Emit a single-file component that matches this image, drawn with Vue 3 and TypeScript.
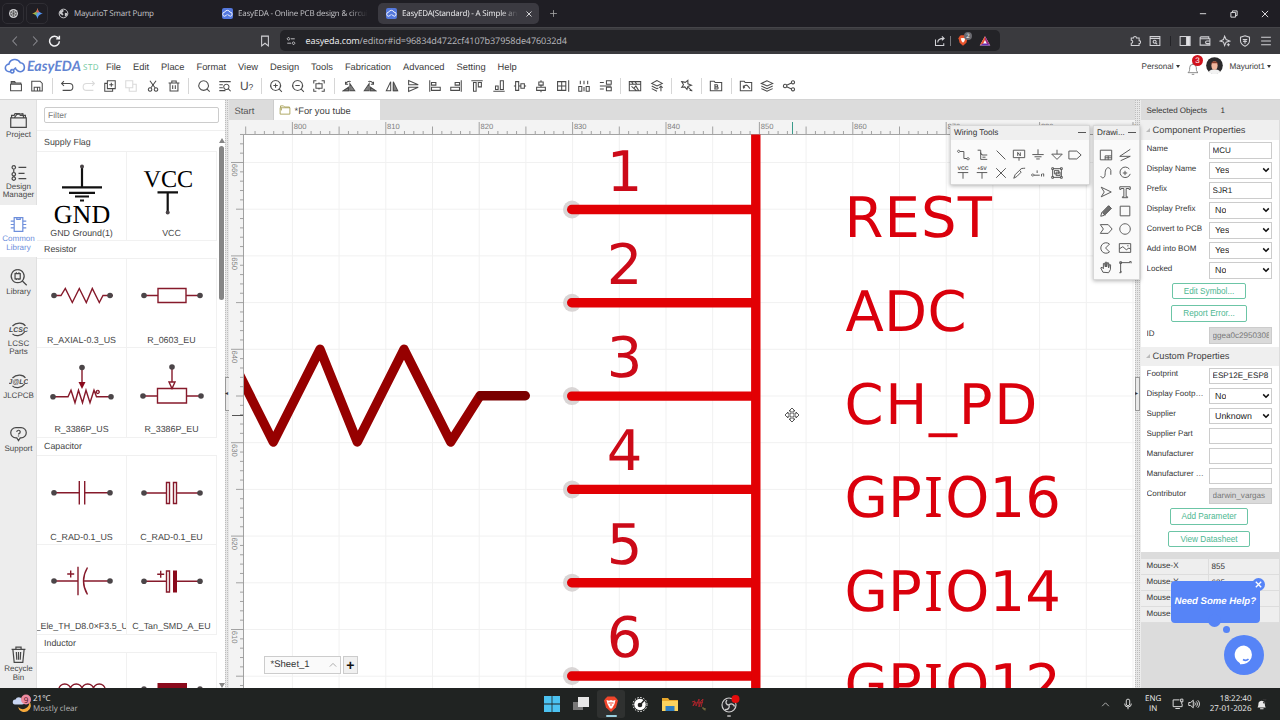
<script setup lang="ts">
interface Icon {
  d?: string
  fill?: string
  text?: string
  dim?: boolean
}

interface Part {
  label: string
  d: string
  fill?: string
  dots: number[][]
  black?: boolean
  text?: { value: string; x: number; y: number; size: number }
}

interface Field {
  label: string
  value: string
  kind?: 'select' | 'readonly'
}

const menus = ['File', 'Edit', 'Place', 'Format', 'View', 'Design', 'Tools', 'Fabrication', 'Advanced', 'Setting', 'Help']

// toolbar groups, drawn on a 16x16 grid
const toolbar: Icon[][] = [
  [
    { d: 'M2.5 5.5V3h4l1 1.5h6v1M1.8 6h12.4v7.5H1.8zM2.5 4.5h11' },
    { d: 'M2 2.5h9.5L14 5v8.8H2zM4.8 13.8V9.5h6.4v4.3M8.5 9.5v4.3' }
  ],
  [
    { d: 'M4.5 2.5L1.8 5.2l2.7 2.7M1.8 5.2h9a3.8 3.8 0 0 1 0 7.8H3' },
    { d: 'M11.5 2.5l2.7 2.7-2.7 2.7M14.2 5.2h-9a3.8 3.8 0 0 0 0 7.8H13', dim: true },
    { d: 'M5 2h9v9H5zM9.5 4.2v4.6M7.2 6.5h4.6M5 5H2v9h9v-3' },
    { d: 'M2 2h8v8H2zM6 10v4h8V6h-4', dim: true },
    { d: 'M4.5 2l5.8 8M11.5 2L5.7 10M4.6 10a2 2 0 1 0 .1 0M11.4 10a2 2 0 1 0 .1 0' },
    { d: 'M1.8 4.5h12.4M5.5 4.5V2.3h5v2.2M3.5 4.5v9.3h9V4.5M6.5 7v4.5M9.5 7v4.5' }
  ],
  [
    { d: 'M7.5 2a5.5 5.5 0 1 0 .1 0M11.5 11.5l3 3' },
    { d: 'M1.5 3h13M1.5 6.5h4M1.5 10h4M1.5 13.3h7M9.5 6a3 3 0 1 0 .1 0M11.8 11.2l2.7 2.8' },
    { text: 'U' }
  ],
  [
    { d: 'M7.5 1.8a5.7 5.7 0 1 0 .1 0M11.7 11.7l3 3M7.5 5v5M5 7.5h5' },
    { d: 'M7.5 1.8a5.7 5.7 0 1 0 .1 0M11.7 11.7l3 3M5 7.5h5' },
    { d: 'M2 5V2h3M11 2h3v3M14 11v3h-3M5 14H2v-3M4.5 5.5h7v5h-7zM8 4v1.5M8 10.5V12' }
  ],
  [
    { d: 'M1.5 13.5h6v-4zM9 13.5h5.5L9 5.5zM4 6a4.5 4.5 0 0 1 6-3M4 3v3h3', fill: 'M2 13.5h5.5V9.8zM10 8.5v4.500h3z' },
    { d: 'M14.5 13.5h-6v-4zM7 13.5H1.5L7 5.5zM12 6a4.5 4.5 0 0 0-6-3M12 3v3H9', fill: 'M14 13.5H8.5V9.8zM6 8.5v4.500H3z' },
    { d: 'M6.5 3v10.5H1.5zM9.5 3v10.5h5z', fill: 'M9.5 5v8.5h4z' },
    { d: 'M3 6.5V1.8l11 4.7zM3 9.5v4.7l11-4.7z' },
    { d: 'M2 1.5v13M4 4h5v3H4zM4 9.5h10v3.5H4z' },
    { d: 'M14 1.5v13M12 4H7v3h5zM12 9.5H2v3.5h10z' },
    { d: 'M1.5 2h13M4 4h3v10H4zM9.5 4H13v5H9.5z' },
    { d: 'M1.5 14h13M4 12h3V8H4zM9.5 12H13V2H9.5z' },
    { d: 'M1 8h2M3 3h3.5v10H3zM6.5 8H9M9 5.5h4v5H9zM13 8h2' },
    { d: 'M8 1.5v2M5.5 3.5h5v3.5h-5zM8 7v2.5M3 9.5h10v3.5H3zM8 13v2' },
    { d: 'M1.8 3h9.4v10H1.8zM6.5 3v10M1.8 8h9.4M14.5 1.5v13' },
    { d: 'M2 8.5h3.500V14H2zM10.5 8.5H14V14h-3.500zM8 2v4M8 9v5M3.8 2v4M12.2 2v4' },
    { d: 'M8.5 2H14v4H8.5zM8.5 9.5H14v4H8.5zM1 4h4.5M1 8h13M1 11.5h4.5' }
  ],
  [
    { d: 'M1.5 3h13v10.5h-13zM1.5 6h13M4 3l2 3M8 3l2 3M4 8.5l6 5M7 10.5l2-2.5 3 5' },
    { d: 'M8 1.8L2 5l6 3 6-3zM2 8l6 3 1.5-.7M2 11l6 3M12.5 14V8M10.5 10l2-2 2 2' }
  ],
  [{ d: 'M2 3l4 .8L9 1.5v4L13 7l-4 1.5L8 12 5.5 9 2 9.5 4 6.5zM9.5 9.5l4.5 4.5M11 13h3' }],
  [{ d: 'M1.5 13.5V2.5H6l1 1.5h7.5v9.5zM6 6.500h3a1.300 1.300 0 0 1 0 2.500H6.500h3a1.300 1.300 0 0 1 0 2.500H6M6.800 6.500v5' }],
  [
    { d: 'M1.5 13.5V2.5H6l1 1.5h7.5v9.5zM5.5 11a2.8 2.8 0 0 1 5-2.5l2 2.5M5 7.5v2h2' },
    { d: 'M8 2L1.5 5 8 8l6.500-3zM1.5 8L8 11l6.500-3M1.5 11L8 14l6.500-3' },
    { d: 'M3.5 6a2 2 0 1 0 .1 0M12.5 2a1.8 1.8 0 1 0 .1 0M12.5 10a1.8 1.8 0 1 0 .1 0M5.3 7.2l5.5-2.7M5.3 8.8l5.5 2.7' }
  ]
]

const rail = [
  { label: ['Project'], d: 'M3 8V5h3l1-2h5l1 2h6v3M2 8h18v11H2zM6 8l3-4 7-1 1 5' },
  { label: ['Design', 'Manager'], d: 'M5.5 3a2 2 0 1 0 .1 0M5.5 7v4M5.5 11a2 2 0 1 0 .1 0M5.5 15v1M5.5 16a2 2 0 1 0 .1 0M11 5h9M11 12h7M11 18h9' },
  { label: ['Common', 'Library'], d: 'M6 3h10v16H6zM9 3v2h4V3M6 7H2M6 11H2M6 15H2M16 7h4M16 11h4M16 15h4', active: true },
  { label: ['Library'], d: 'M10 2a7.5 7.5 0 1 0 .1 0M15.5 15l5 5M7 6.5h6v6H7zM8.5 6.5V5M11.5 6.5V5M8.5 14v-1.5M11.5 14v-1.5' },
  { label: ['LCSC', 'Parts'], d: 'M4 7C8 3 16 2 19 7M18 14C14 19 7 19 4 16', logo: 'LCSC' },
  { label: ['JLCPCB'], d: 'M4 7C8 3 16 2 19 7M18 14C14 19 7 19 4 16', logo: 'J@LC' },
  { label: ['Support'], d: 'M8 3h6a6 6 0 0 1 0 12l-1 0-2 3-2-3H8A6 6 0 0 1 8 3zM9 8a2 2 0 1 1 2.5 2l-.5 1M11 12.3v.9' }
]

const library: { title: string; parts: Part[] }[] = [
  {
    title: 'Supply Flag',
    parts: [
      {
        label: 'GND Ground(1)',
        d: 'M45 14v21M25 35.3h40M32 40.8h26M38 44.5h14M43 48.5h4',
        dots: [[45, 14.5, 2]],
        black: true,
        text: { value: 'GND', x: 45, y: 71, size: 26 }
      },
      {
        label: 'VCC',
        d: 'M30.5 40.3h20.5M40.7 41v19',
        dots: [[40.7, 60.5, 2]],
        black: true,
        text: { value: 'VCC', x: 41.3, y: 35.3, size: 24.2 }
      }
    ]
  },
  {
    title: 'Resistor',
    parts: [
      { label: 'R_AXIAL-0.3_US', d: 'M17 36.5h7l4.3-7 7 14 7-14 7 14 6-14 7 14 3.7-7h10', dots: [[17, 36.5], [73, 36.5]] },
      { label: 'R_0603_EU', d: 'M17 36.5h14M31 29.5h28v14H31zM59 36.5h14', dots: [[17, 36.5], [73, 36.5]] },
      {
        label: 'R_3386P_US',
        d: 'M45 19.5v16M16 48.7h15l3-6.5 4 12.5 3.5-12.5 4 12.5L49 42.2l4 12.5 4-12.5 2.5 6.5H74M60.7 42.5a1.5 1.5 0 1 0 .1 0',
        fill: 'M41.5 34h7L45 41z',
        dots: [[45, 19.5], [16, 48.7], [74, 48.7]]
      },
      {
        label: 'R_3386P_EU',
        d: 'M45 19v15M42 34h6l-3 6.5zM16 48h14.5M30.5 40.5h29V55h-29zM59.5 48H74',
        dots: [[45, 19], [16, 48], [74, 48]]
      }
    ]
  },
  {
    title: 'Capacitor',
    parts: [
      { label: 'C_RAD-0.1_US', d: 'M17 36.7h25.3M42.3 25v23.5M47.7 25v23.5M47.7 36.7H73', dots: [[17, 36.7], [73, 36.7]] },
      { label: 'C_RAD-0.1_EU', d: 'M17 37h22.5M39.5 26.5h3v21h-3zM46.5 26.5h3v21h-3zM49.5 37H73', dots: [[17, 37], [73, 37]] },
      { label: 'C_Ele_TH_D8.0×F3.5_US', d: 'M17 36h24M41 21.7v28.6M50.5 22.5q-8 13.5 0 27M46.5 36H73M30.2 29h7M33.7 25.5v7', dots: [[17, 36], [73, 36]] },
      {
        label: 'C_Tan_SMD_A_EU',
        d: 'M17 36.3h22.5M39.5 26h3v21h-3zM49.5 36.3H73M30.2 29.3h7M33.7 25.8v7',
        fill: 'M46 25.5h4v22h-4z',
        dots: [[17, 36.3], [73, 36.3]]
      }
    ]
  },
  {
    title: 'Inductor',
    parts: [
      { label: 'L_US', d: 'M22 36a5.7 5 0 0 1 11.5 0a5.7 5 0 0 1 11.5 0a5.7 5 0 0 1 11.5 0a5.7 5 0 0 1 11.5 0', dots: [] },
      { label: 'L_EU', d: 'M17 36h56', fill: 'M30.5 30h29.5v13H30.5z', dots: [[17, 36], [73, 36]] }
    ]
  }
]

const wiringTools: Icon[] = [
  { d: 'M3 2.5a1.3 1.3 0 1 0 .1 0M4.5 4H9v8h3.5M13.7 11a1.3 1.3 0 1 0 .1 0' },
  { d: 'M3 2.500h3.500v4l2 1.500H14M6.500 5v8H14M8.500 8l-2-2M8.500 10.500H12' },
  { d: 'M3 3l10 10' },
  { d: 'M1.5 2.5h13V11h-13zM6.5 9V5l3 4V5M8 11v3.5' },
  { d: 'M8 1.5V7M1.5 7.5h13M4 10h8M6 12.5h4' },
  { d: 'M8 2v5M2 7h12l-6 6z' },
  { d: 'M1 3.5h9L15 8l-5 4.5H1z' },
  { text: 'VCC', d: 'M2 7.5h12M8 7.5v7' },
  { text: '+5V', d: 'M2 7.5h12M8 7.5v7' },
  { d: 'M2.5 2.5l11 11M13.5 2.5l-11 11' },
  { d: 'M2 14l1.5-4 5-5 2 2-5 5zM9 5c1-3 3-2 6-2.5' },
  { d: 'M2 9a1.3 1.3 0 1 0 .1 0M3.5 10.5H10M7 8V5M12 9v3M14.5 12V9h-1.5' },
  { d: 'M2 2h2v2H2zM12 2h2v2h-2zM2 12h2v2H2zM12 12h2v2h-2zM4 3h8M3 4v8M13 4v8M4 13h8M5 5h5v4H5zM7 7h4.5v4H7z' }
]

const drawingTools: Icon[] = [
  { d: 'M1.5 2.5h13v11h-13zM7 9h7.5M7 9v4.5M10.5 9v4.5M7 11.2h7.5' },
  { d: 'M14 1.500L2 9.5h12L3 14.500' },
  { d: 'M2 11.500c1.500 3.500 5 2.500 5-2.500 0-8 5-9 6.500-4v5' },
  { d: 'M13 3.5A6 6 0 1 0 14 9M8 5.5v5M5.5 8h5' },
  { d: 'M2.5 2.5L14 8 2.5 13.5 6 8z' },
  { d: 'M2 2h12v3h-1.5V4H9.3v9.5H11V14.5H5v-1h1.7V4H3.5v1H2z' },
  { d: 'M2 14l1-4 8-8 3 3-8 8zM4 10l3 3', fill: 'M4 9.5l7-7.5 3 3-7.5 7.5z' },
  { d: 'M2.5 2.5h11v11h-11z' },
  { d: 'M1.5 3h9L15 8l-4.5 5h-9L5 8z' },
  { d: 'M8 2a6 6 0 1 0 .1 0' },
  { d: 'M12 3.5A6 6 0 1 0 12 12.5L7.5 8z' },
  { d: 'M1.5 3h13v10h-13zM1.5 9l4-2.5 4 3.5 3-2 2 1.5M10.5 5.5h1.5' },
  { d: 'M4.5 14L2 9l1.5-.8L5 10V4l1.3-.3L7.3 8V2.5h1.4V8l1-5 1.3.3V9l1-4 1.3.5L13 11l-2 3.5z' },
  { d: 'M3 14V3h11M1.5 14.5h2v-2M13 1.8h2v2M2 2h2v2H2z' }
]

const componentFields: Field[] = [
  { label: 'Name', value: 'MCU' },
  { label: 'Display Name', value: 'Yes', kind: 'select' },
  { label: 'Prefix', value: 'SJR1' },
  { label: 'Display Prefix', value: 'No', kind: 'select' },
  { label: 'Convert to PCB', value: 'Yes', kind: 'select' },
  { label: 'Add into BOM', value: 'Yes', kind: 'select' },
  { label: 'Locked', value: 'No', kind: 'select' }
]

const customFields: Field[] = [
  { label: 'Footprint', value: 'ESP12E_ESP8' },
  { label: 'Display Footprint', value: 'No', kind: 'select' },
  { label: 'Supplier', value: 'Unknown', kind: 'select' },
  { label: 'Supplier Part', value: '' },
  { label: 'Manufacturer', value: '' },
  { label: 'Manufacturer Part', value: '' },
  { label: 'Contributor', value: 'darwin_vargas', kind: 'readonly' }
]

const mouseRows = [
  ['Mouse-X', '855'],
  ['Mouse-Y', '635'],
  ['Mouse-DX', '25'],
  ['Mouse-DY', '10']
]

// one sheet unit is 9.34 screen pixels at this zoom level
const unit = 9.34
const xTicks = Array.from({ length: 96 }, (_, i) => ({ n: 795 + i, x: 292.4 + (i - 5) * unit }))
const yTicks = Array.from({ length: 60 }, (_, i) => ({ n: 663 - i, y: 162.5 + (i - 3) * unit }))

const pins = [
  { no: '1', name: 'REST', gap: 1.1 },
  { no: '2', name: 'ADC', gap: 0.3 },
  { no: '3', name: 'CH_PD', gap: 1.7 },
  { no: '4', name: 'GPIO16', gap: 0.2 },
  { no: '5', name: 'GPIO14', gap: 0.2 },
  { no: '6', name: 'GPIO12', gap: 0.2 }
].map((p, i) => ({ ...p, y: 209.5 + i * 93.3 }))
</script>

<template>
  <div class="screen">
    <!-- browser tabs -->
    <div class="tabs">
      <div class="pinned">
        <svg viewBox="0 0 16 16" class="i11"><circle cx="8" cy="8" r="6.5" fill="#d2d2d5" /><path d="M8 3.5l4 2.3v4.5L8 12.5l-4-2.2V5.8zM8 3.5v9M4 5.8l8 4.5M12 5.8l-8 4.5" stroke="#444" fill="none" /></svg>
      </div>
      <div class="pinned">
        <svg viewBox="0 0 16 16" class="i11">
          <defs>
            <linearGradient id="gem" x1="0" y1=".3" x2="1" y2=".7">
              <stop offset=".15" stop-color="#f0b429" />
              <stop offset=".4" stop-color="#6fb56a" />
              <stop offset=".55" stop-color="#5a9bf5" />
              <stop offset="1" stop-color="#4a8bf5" />
            </linearGradient>
          </defs>
          <path d="M8 0C9 5 11 7 16 8 11 9 9 11 8 16 7 11 5 9 0 8 5 7 7 5 8 0z" fill="url(#gem)" />
          <path d="M8 0C8.800 4 9.500 5.500 11 6.500L5.500 6C7 5 7.500 3 8 0z" fill="#e8554a" />
        </svg>
      </div>
      <div class="tab t1">
        <svg viewBox="0 0 16 16" class="i11"><circle cx="8" cy="8" r="6.3" fill="none" stroke="#c8c8cb" stroke-width="1.4" /><path d="M3 4l4-1.5 1.5 2L6 7l2 2-1 2-3-2-2-1zM10 7l4 .5-1.5 4-2.5 1z" fill="#c8c8cb" /></svg>
        <span>MayurioT Smart Pump</span>
      </div>
      <div class="tab t2">
        <span class="fav"><svg viewBox="0 0 16 16"><path d="M4 12a3 3 0 0 1 0-6 4 4 0 0 1 7.5 0A3 3 0 0 1 12 12L8 9.5M4 12l3-2" /></svg></span>
        <span class="fade">EasyEDA - Online PCB design &amp; circuit</span>
      </div>
      <div class="tab t3">
        <span class="fav"><svg viewBox="0 0 16 16"><path d="M4 12a3 3 0 0 1 0-6 4 4 0 0 1 7.5 0A3 3 0 0 1 12 12L8 9.5M4 12l3-2" /></svg></span>
        <span class="fade">EasyEDA(Standard) - A Simple and</span>
        <svg viewBox="0 0 16 16" class="close"><path d="M3 3l10 10M13 3L3 13" /></svg>
      </div>
      <svg viewBox="0 0 16 16" class="new-tab"><path d="M8 2v12M2 8h12" /></svg>
      <div class="win">
        <svg viewBox="0 0 16 16"><path d="M3 7.5h10" /></svg>
        <svg viewBox="0 0 16 16"><path d="M3 5.5h7.5V13H3zM5.5 5.5V3H13v7.5h-2.5" /></svg>
        <svg viewBox="0 0 16 16"><path d="M3 3l10 10M13 3L3 13" /></svg>
      </div>
    </div>

    <!-- address bar -->
    <div class="nav">
      <svg viewBox="0 0 16 16" class="b dimmed"><path d="M10.5 2L5 8l5.5 6" /></svg>
      <svg viewBox="0 0 16 16" class="b dimmed"><path d="M5.5 2L11 8l-5.5 6" /></svg>
      <svg viewBox="0 0 16 16" class="b reload"><path d="M13 5.5A6 6 0 1 0 14 9M14 2v4h-4" /></svg>
      <svg viewBox="0 0 16 16" class="b mark"><path d="M3.500 1.500h9v13L8 11l-4.500 3.500z" /></svg>
      <div class="url">
        <svg viewBox="0 0 16 16" class="b tune"><path d="M4 2.5a2 2 0 1 0 .1 0M8 4.5h6M12 9.5a2 2 0 1 0 .1 0M2 11.5h6" /></svg>
        <span class="addr"><b>easyeda.com</b>/editor#id=96834d4722cf4107b37958de476032d4</span>
        <svg viewBox="0 0 16 16" class="b"><path d="M2 6v8h11v-3M5 10c0-4 3-5.5 8-5.5M10.5 2L13.5 4.5 10.5 7" /></svg>
        <i class="bar" />
        <div class="shield">
          <svg viewBox="0 0 16 16"><path d="M3 3l2-2h6l2 2 1 2-1.5 6L8 15l-4.5-4L2 5z" fill="#e8542c" /><path d="M5 5l3-.5L11 5l-1 3.5L8 11 6 8.5z" fill="#fff" /></svg>
          <em>2</em>
        </div>
        <svg viewBox="0 0 16 16" class="bat"><path d="M8 1.5L15 14H1z" fill="#fff" /><path d="M8 1.5L1 14l4.5-2.5L8 6.5z" fill="#e8512f" /><path d="M8 1.5L15 14l-4.5-2.5L8 6.5z" fill="#a0267f" /><path d="M1 14h14l-4.5-2.8h-5z" fill="#6a2bb0" /></svg>
      </div>
      <div class="ext">
        <svg viewBox="0 0 16 16" class="b"><path d="M3 4h3a2 2 0 1 1 4 0h3.5v3.5a2 2 0 1 1 0 4V14H3v-3a2 2 0 1 0 0-4z" /></svg>
        <svg viewBox="0 0 16 16" class="b"><path d="M1.5 2h13v12h-13zM1.5 4.5h13M7.5 7a2 2 0 1 0 .1 0M9 10.5l2 2" /></svg>
        <i class="bar" />
        <svg viewBox="0 0 16 16" class="b"><path d="M1.5 2h13v12h-13z" /><path d="M10 2h4.5v12H10z" class="pane" /></svg>
        <svg viewBox="0 0 16 16" class="b"><path d="M13 5V2.5H3a1.5 1.5 0 0 0-1.5 2V13.5h13V5H2M14.5 8h-4a1.5 1.5 0 0 0 0 3.5h4" /></svg>
        <svg viewBox="0 0 16 16" class="b"><path d="M7.5 1.5L9.5 6l5 2-5 1.5L7.5 14 6 9.5 1.5 8 6 6zM12.5 11v4M10.5 13h4" /></svg>
        <svg viewBox="0 0 16 16" class="b"><path d="M8 1l6 2v4.5c0 4-3 6-6 7.5-3-1.5-6-3.5-6-7.5V3zM5 6h6M5.5 8.5h5M8 6v5.5" /></svg>
        <svg viewBox="0 0 16 16" class="b"><path d="M1.5 3h13M1.5 8h13M1.5 13h13" /></svg>
      </div>
    </div>

    <!-- editor header -->
    <header class="head">
      <div class="menu-row">
        <svg viewBox="0 0 24 18" class="cloud"><path d="M7 14.5H5.5A4 4 0 0 1 5 6.5a6.5 6.5 0 0 1 12-1.5 4.8 4.8 0 0 1 .5 9.5c-3 0-4.5-1.5-6-4M8.5 12.3a1.8 1.8 0 1 0 .1 0M10 12.5l2.5-2.5" /></svg>
        <span class="brand">EasyEDA</span>
        <span class="std">STD</span>
        <nav>
          <span v-for="m in menus" :key="m">{{ m }}</span>
        </nav>
        <div class="account">
          <span>Personal</span><i class="caret" />
          <div class="bell">
            <svg viewBox="0 0 16 18"><path d="M2 14c2-1.5 2-3 2-6a4 4 0 0 1 8 0c0 3 0 4.5 2 6zM8 4V2.5M6.5 16h3" /></svg>
            <em>3</em>
          </div>
          <svg viewBox="0 0 18 18" class="avatar">
            <circle cx="9" cy="9" r="8.8" fill="#2b2a2c" />
            <path d="M3 16c1-4 11-4 12 0a9 9 0 0 1-12 0z" fill="#f2f2f2" />
            <ellipse cx="9" cy="9" rx="3.3" ry="4.5" fill="#f0b79e" />
            <path d="M5 9c0-6 8-6 8 0l-1-2.5H6z" fill="#8a3f2c" />
          </svg>
          <span>Mayuriot1</span><i class="caret" />
        </div>
      </div>
      <div class="tool-row">
        <template v-for="(group, gi) in toolbar" :key="gi">
          <i v-if="gi" class="sep" />
          <span v-for="(ic, i) in group" :key="i" class="tool" :class="{ dim: ic.dim }">
            <template v-if="ic.text">{{ ic.text }}<small>?</small></template>
            <svg v-else viewBox="0 0 16 16">
              <path :d="ic.d" />
              <path v-if="ic.fill" :d="ic.fill" class="solid" />
            </svg>
          </span>
        </template>
      </div>
    </header>

    <main class="body">
      <aside class="rail">
        <div v-for="r in rail" :key="r.label[0]" class="rail-item" :class="{ active: r.active }">
          <svg viewBox="0 0 22 22">
            <path :d="r.d" />
            <text v-if="r.logo" x="11" y="13.5" text-anchor="middle">{{ r.logo }}</text>
          </svg>
          <span v-for="l in r.label" :key="l">{{ l }}</span>
        </div>
        <div class="rail-item bin">
          <svg viewBox="0 0 22 22"><path d="M3 5h16M8 5V2.5h6V5M4.5 5l1.5 15h10l1.5-15M8.5 8l.5 9M11 8v9M13.5 8l-.5 9" /></svg>
          <span>Recycle</span><span>Bin</span>
        </div>
      </aside>

      <section class="library">
        <div class="filter"><div>Filter</div></div>
        <div class="lib-body">
          <div class="lib-list">
            <template v-for="sec in library" :key="sec.title">
              <h4>{{ sec.title }}</h4>
              <div class="parts">
                <div v-for="p in sec.parts" :key="p.label" class="part">
                  <svg viewBox="0 0 90 76" :class="{ black: p.black }">
                    <path :d="p.d" class="wire" />
                    <path v-if="p.fill" :d="p.fill" class="block" />
                    <circle v-for="(c, i) in p.dots" :key="i" :cx="c[0]" :cy="c[1]" :r="c[2] ?? 2.8" />
                    <text v-if="p.text" :x="p.text.x" :y="p.text.y" :font-size="p.text.size" text-anchor="middle">{{ p.text.value }}</text>
                  </svg>
                  <span>{{ p.label }}</span>
                </div>
              </div>
            </template>
          </div>
          <div class="scroll"><i class="up" /><b /><i class="down" /></div>
        </div>
      </section>

      <div class="splitter"><i>◂</i></div>

      <section class="work">
        <div class="doc-tabs">
          <span class="doc">Start</span>
          <span class="doc on">
            <svg viewBox="0 0 16 16"><path d="M2 5V2.5h4L7.5 4H14v1M1.5 5h13v8.5h-13zM3 5v3h1" /></svg>
            *For you tube
          </span>
        </div>
        <svg class="canvas" viewBox="229 120 906 568" width="906" height="568">
          <defs>
            <clipPath id="sheet-area"><rect x="244" y="135" width="891" height="553" /></clipPath>
          </defs>
          <rect x="229" y="120" width="906" height="568" fill="#f3f3f3" />
          <rect x="244" y="134.5" width="891" height="553.5" fill="#fff" />
          <g class="grid">
            <template v-for="t in xTicks" :key="t.n">
              <path v-if="t.n % 5 === 0 && t.n > 795" :d="`M${t.x} 135V688`" />
            </template>
            <template v-for="t in yTicks" :key="t.n">
              <path v-if="t.n % 5 === 0" :d="`M244 ${t.y}H1135`" />
            </template>
          </g>
          <g class="ruler">
            <path d="M243.5 688V134.5H1135" />
            <path v-for="t in xTicks" :key="t.n" :d="`M${t.x} 134V${t.n % 10 === 0 ? 122 : t.n % 5 === 0 ? 126.5 : 131}`" />
            <path v-for="t in yTicks" :key="t.n" :d="`M243.5 ${t.y}H${t.n % 10 === 0 ? 231 : t.n % 5 === 0 ? 236 : 240}`" />
            <template v-for="t in xTicks" :key="t.n">
              <text v-if="t.n % 10 === 0" :x="t.x + 1.3" y="129">{{ t.n }}</text>
            </template>
            <template v-for="t in yTicks" :key="t.n">
              <text v-if="t.n % 10 === 0" :transform="`translate(232.3 ${t.y + 1.3}) rotate(90)`">{{ t.n }}</text>
            </template>
          </g>
          <path d="M792.5 122V134" stroke="#3a9a8a" />
          <path d="M232 415.5H243" stroke="#555" />

          <g class="resistor" clip-path="url(#sheet-area)">
            <path d="M226.7 349.3L273.3 442 320 349.3 357.3 442 404 349.3 450.7 442 480 395.7" />
            <path d="M481 395.7H525.3" class="lead" />
          </g>

          <g class="mcu">
            <template v-for="p in pins" :key="p.no">
              <circle cx="572" :cy="p.y" r="9" />
              <path :d="`M571.7 ${p.y}H753`" />
              <text x="624.5" :y="p.y - 19" text-anchor="middle" class="no">{{ p.no }}</text>
              <text v-if="p.name.startsWith('GPIO')" x="844.5" :y="p.y + 27.8" :letter-spacing="p.gap">
                GP<tspan class="bar-i" dx="2">I</tspan><tspan dx="2">O{{ p.name.slice(4) }}</tspan>
              </text>
              <text v-else :x="p.name === 'ADC' ? 845.5 : 844.5" :y="p.y + 27.8" :letter-spacing="p.gap">{{ p.name }}</text>
            </template>
            <path d="M755.8 134.5V688" class="edge" />
          </g>
          <g class="cursor" transform="translate(792 415)">
            <path d="M0-7L3-4H1V-1H4V-3L7 0 4 3V1H1V4H3L0 7-3 4H-1V1H-4V3L-7 0-4-3V-1H-1V-4H-3z" />
          </g>
        </svg>

        <div class="sheets">
          <span class="sheet">*Sheet_1<svg viewBox="0 0 10 10"><path d="M1 7l4-4 4 4" /></svg></span>
          <span class="add">+</span>
        </div>

        <div class="float wiring">
          <div class="float-head">Wiring Tools<i /></div>
          <div class="icons">
            <svg v-for="(ic, i) in wiringTools" :key="i" viewBox="0 0 16 16">
              <path :d="ic.d" />
              <text v-if="ic.text" x="8" y="5" text-anchor="middle">{{ ic.text }}</text>
            </svg>
          </div>
        </div>
        <div class="float drawing">
          <div class="float-head">Drawi...<i /></div>
          <div class="icons">
            <svg v-for="(ic, i) in drawingTools" :key="i" viewBox="0 0 16 16">
              <path :d="ic.d" />
              <path v-if="ic.fill" :d="ic.fill" class="solid" />
            </svg>
          </div>
        </div>
      </section>

      <div class="splitter right"><i>▸</i></div>

      <aside class="props">
        <div class="selected"><span>Selected Objects</span><span>1</span></div>
        <h3><i />Component Properties</h3>
        <div class="fields">
          <div v-for="f in componentFields" :key="f.label" class="field">
            <label>{{ f.label }}</label>
            <div class="input" :class="f.kind">
              <span>{{ f.value }}</span>
              <svg v-if="f.kind === 'select'" viewBox="0 0 10 10"><path d="M1.5 3L5 6.5 8.5 3" /></svg>
            </div>
          </div>
          <div class="btns">
            <button class="w74">Edit Symbol...</button>
            <button class="w76">Report Error...</button>
          </div>
          <div class="field">
            <label>ID</label>
            <div class="input readonly"><span>ggea0c2950308</span></div>
          </div>
        </div>
        <h3 class="second"><i />Custom Properties</h3>
        <div class="fields custom">
          <div v-for="f in customFields" :key="f.label" class="field">
            <label>{{ f.label }}</label>
            <div class="input" :class="f.kind">
              <span>{{ f.value }}</span>
              <svg v-if="f.kind === 'select'" viewBox="0 0 10 10"><path d="M1.5 3L5 6.5 8.5 3" /></svg>
            </div>
          </div>
          <div class="btns">
            <button class="w78">Add Parameter</button>
            <button class="w81">View Datasheet</button>
          </div>
        </div>
        <div class="mouse">
          <div v-for="m in mouseRows" :key="m[0]"><span>{{ m[0] }}</span><span>{{ m[1] }}</span></div>
        </div>
      </aside>

      <div class="help">
        <div class="bubble">Need Some Help?</div>
        <i class="x"><svg viewBox="0 0 10 10"><path d="M2 2l6 6M8 2L2 8" /></svg></i>
        <i class="half" /><i class="dot" />
        <div class="chat">
          <svg viewBox="0 0 20 20"><path d="M10 .5a9.3 9.3 0 0 0-4 17.7c-.3.8.2 1.3 1 1l3-.3A9.3 9.3 0 0 0 10 .5z" fill="#fff" /><path d="M9 14.5c2 1.3 4 1 5.5-.5" stroke="#5684f7" stroke-width="1.6" fill="none" /></svg>
        </div>
      </div>
    </main>

    <footer class="taskbar">
      <div class="weather">
        <svg viewBox="0 0 20 20">
          <path d="M6 13a6.5 6.5 0 0 0 11-6 6.5 6.5 0 1 1-11 6z" fill="#f6a93b" />
          <path d="M3 10.5a2.5 2.5 0 0 1 .5-5 3.5 3.5 0 0 1 6.5 0 2.5 2.5 0 0 1 0 5z" fill="#c9d6f2" />
          <circle cx="14" cy="5.5" r="5" fill="#ee8ba0" />
          <text x="14" y="8.5" text-anchor="middle">9</text>
        </svg>
        <div><span>21°C</span><span class="sub">Mostly clear</span></div>
      </div>
      <div class="apps">
        <div class="app"><svg viewBox="0 0 16 16"><path d="M0 0h7.6v7.6H0zM8.4 0H16v7.6H8.4zM0 8.4h7.6V16H0zM8.4 8.4H16V16H8.4z" fill="#4cc2f1" /></svg></div>
        <div class="app"><svg viewBox="0 0 16 16"><path d="M0 6h10v8H0z" fill="#777" /><path d="M5 1h11v10H5z" fill="#e6e6e6" /></svg></div>
        <div class="app live"><svg viewBox="0 0 16 16"><path d="M2.5 2.5l2-2h7l2 2 1.5 2-2 7L8 16l-5-4.5-2-7z" fill="#f0452a" /><path d="M3.500 4l2.500.8 2-.8 2 .8 2.500-.8-1 4L9 12.500H7L4.500 8z" fill="#fff" /><path d="M5.500 7h1.500M9 7h1.500M8 6v4" stroke="#f0452a" /></svg></div>
        <div class="app"><svg viewBox="0 0 16 16"><circle cx="8" cy="8.5" r="5.8" fill="#fff" /><circle cx="8" cy="8.5" r="7" fill="none" stroke="#fff" stroke-dasharray="1.5 1.5" /><circle cx="8" cy="9" r="2.3" fill="#222" /><path d="M8 9l4.500-5" stroke="#222" stroke-width="1.5" /></svg></div>
        <div class="app"><svg viewBox="0 0 16 16"><path d="M0 2h6l1.5 2H16v3H0z" fill="#e8a82c" /><path d="M0 5h16v10H0z" fill="#fbd35e" /><path d="M3.5 10h9v5h-9z" fill="#2f7fc2" /></svg></div>
        <div class="app"><svg viewBox="0 0 16 16"><path d="M1 6l3-1-2 5 3-4v4l3-7v8l2-6 2-2-2 8M7 7l5-.5" fill="none" stroke="#a8232a" stroke-width="1" /><path d="M11 12h2v2M14 12v2.5" fill="none" stroke="#9a8a4a" stroke-width=".8" /></svg></div>
        <div class="app obs"><svg viewBox="0 0 20 20"><circle cx="9" cy="11" r="7" fill="#27272a" stroke="#cfcfcf" stroke-width="1.2" /><path d="M9 11c-3 0-4-3-2-5M9 11c2-2 5-1 5.5 1.5M9 11c1 3-1 5-4 4.5" fill="none" stroke="#cfcfcf" stroke-width="1.3" /><circle cx="15.5" cy="5" r="4" fill="#e60c0c" /></svg></div>
      </div>
      <div class="tray">
        <svg viewBox="0 0 16 16" class="up"><path d="M2 11l6-6 6 6" /></svg>
        <svg viewBox="0 0 16 16" class="mic"><path d="M8 1.5a2.3 2.3 0 0 1 2.3 2.3V8a2.3 2.3 0 0 1-4.6 0V3.8A2.3 2.3 0 0 1 8 1.5zM3.5 7.5a4.5 4.5 0 0 0 9 0M8 12v3" /></svg>
        <div class="stack lang"><span>ENG</span><span>IN</span></div>
        <svg viewBox="0 0 16 16" class="net"><path d="M10 2.5H1.5v9h12V8M4.5 14h6M11.5 1.5h3V5h-3zM13 5v3" /></svg>
        <svg viewBox="0 0 16 16" class="vol"><path d="M1 6h2.5L7 3v10l-3.500-3H1zM9 6c1 1 1 3 0 4M11 4.500c2 2 2 5 0 7M13 3c3 3 3 7 0 10" /></svg>
        <div class="stack time"><span>18:22:40</span><span>27-01-2026</span></div>
        <svg viewBox="0 0 16 16" class="ring"><path d="M2 12.500c1.500-2 1-4.500 1.500-6.500a4.600 4.600 0 0 1 8 0c.5 2 0 4.500 1.500 6.500zM5.500 13.500h4.500v1.500H5.500z" /><path d="M9 2h4.500L9.500 6.500H14" class="zz" /></svg>
      </div>
    </footer>
  </div>
</template>

<style>
body {
  background: #fff;
  overflow: hidden;
}
</style>

<style scoped>
.screen {
  width: 1280px;
  height: 720px;
  display: flex;
  flex-direction: column;
  overflow: hidden;
  font-family: "Liberation Sans", Arial, sans-serif;
  font-size: 8px;
  color: #333;
  text-rendering: geometricPrecision;
}

.screen *,
.screen {
  box-sizing: border-box;
}

svg {
  display: block;
  flex-shrink: 0;
}

i,
em {
  font-style: normal;
}

/* browser chrome */
.tabs {
  height: 27px;
  flex-shrink: 0;
  display: flex;
  align-items: center;
  background: #1f1e24;
  color: #c4c4c8;
  font: 8px "Open Sans", "Noto Sans", sans-serif;
  letter-spacing: -.2px;
  padding-left: 2px;
}

.pinned {
  width: 22px;
  height: 21px;
  margin-right: 2px;
  border: 1px solid #2f2e34;
  border-radius: 5px;
  display: flex;
  align-items: center;
  justify-content: center;
}

.i11 {
  width: 11px;
  height: 11px;
}

.tab {
  display: flex;
  align-items: center;
  height: 21px;
  white-space: nowrap;
}

.t1 {
  width: 164px;
  padding-left: 8px;
  gap: 5px;
}

.t2 {
  width: 164px;
  padding-left: 8px;
  gap: 5px;
}

.t3 {
  width: 161px;
  padding-left: 8px;
  gap: 5px;
  background: #3b3a41;
  border-radius: 5px;
  color: #f0f0f2;
}

.fade {
  width: 130px;
  overflow: hidden;
  mask-image: linear-gradient(90deg, #000 85%, transparent);
}

.t3 .fade {
  width: 116px;
}

.fav {
  width: 11px;
  height: 11px;
  flex-shrink: 0;
  border-radius: 2px;
  background: #5478dd;
}

.fav path {
  fill: none;
  stroke: #fff;
  stroke-width: 1.3;
}

.close {
  width: 8px;
  height: 8px;
  margin-left: 2px;
}

.close path,
.new-tab path,
.win path {
  fill: none;
  stroke: #e2e2e4;
  stroke-width: 1.8;
}

.new-tab {
  width: 9px;
  height: 9px;
  margin-left: 10px;
}

.new-tab path {
  stroke-width: 1.4;
  stroke: #aaa;
}

.win {
  margin-left: auto;
  display: flex;
  gap: 20.7px;
  padding-right: 10.5px;
}

.win svg {
  width: 10px;
  height: 10px;
}

.win path {
  stroke-width: 1.5;
}

.nav {
  height: 27px;
  flex-shrink: 0;
  display: flex;
  align-items: center;
  background: #3a3a3e;
  border-top: 1px solid #454549;
  padding: 0 0 1px 9px;
}

.b {
  width: 12px;
  height: 12px;
}

.b path {
  fill: none;
  stroke: #d2d2d6;
  stroke-width: 1.4;
}

.b .pane {
  fill: #e3e3e6;
}

.b.dimmed {
  margin-right: 7.5px;
}

.b.dimmed path {
  stroke: #8b8b90;
}

.reload {
  width: 13px;
  height: 13px;
}

.reload path {
  stroke: #f2f2f4;
  stroke-width: 1.8;
}

.mark {
  margin-left: 197.5px;
}

.url {
  width: 720px;
  height: 21.5px;
  margin-left: 9.5px;
  padding-left: 6px;
  border-radius: 5px;
  background: #232327;
  display: flex;
  align-items: center;
  color: #b9b9be;
  font: 9.1px "Open Sans", "Noto Sans", sans-serif;
  letter-spacing: -.12px;
}

.tune {
  width: 10px;
  height: 10px;
}

.addr {
  margin-left: 9.5px;
  width: 628px;
}

.addr b {
  font-weight: 400;
  color: #f0f0f2;
}

.bar {
  width: 1px;
  height: 10px;
  background: #77777c;
  margin: 0 6px 0 4.5px;
}

.shield {
  position: relative;
  width: 12px;
}

.shield svg {
  width: 12px;
  height: 13px;
}

.shield em {
  position: absolute;
  left: 7px;
  top: -2px;
  width: 8px;
  height: 8px;
  border-radius: 50%;
  background: #6a6a70;
  color: #fff;
  font-size: 6px;
  line-height: 8px;
  text-align: center;
}

.bat {
  width: 12px;
  height: 12px;
  margin-left: 10px;
}

.ext {
  margin-left: auto;
  display: flex;
  align-items: center;
  gap: 8.2px;
  padding-right: 8.5px;
}

.ext .bar {
  background: #232327;
  margin: 0;
}

/* editor header */
.head {
  height: 46px;
  flex-shrink: 0;
  background: #fff;
  border-bottom: 1px solid #d4d4d4;
}

.menu-row {
  height: 24px;
  display: flex;
  align-items: center;
  padding: 1px 0 0 4px;
  font-size: 9.33px;
  color: #3c3c3c;
}

.cloud {
  width: 23px;
  height: 17px;
}

.cloud path {
  fill: none;
  stroke: #5a80d6;
  stroke-width: 1.7;
}

.brand {
  width: 56px;
  font: italic 700 14.2px Lato, sans-serif;
  color: #6284d2;
  white-space: nowrap;
}

.std {
  width: 23px;
  font: 8px "Open Sans", sans-serif;
  letter-spacing: .5px;
  color: #6cc79b;
  padding-top: 2px;
}

.menu-row nav {
  display: flex;
  gap: 12px;
  white-space: nowrap;
}

.account {
  margin-left: auto;
  padding-right: 9px;
  display: flex;
  align-items: center;
  font-size: 8.2px;
  letter-spacing: -.05px;
}

.caret {
  border: 2.5px solid transparent;
  border-top: 3px solid #333;
  border-bottom: 0;
  margin-left: 2px;
}

.bell {
  position: relative;
  margin-left: 6px;
}

.bell svg {
  width: 14px;
  height: 15px;
  margin-top: 3px;
}

.bell path {
  fill: none;
  stroke: #777;
}

.bell em {
  position: absolute;
  left: 6.5px;
  top: -3px;
  width: 11px;
  height: 11px;
  border-radius: 50%;
  background: #d0111b;
  color: #fff;
  font-size: 8px;
  line-height: 11px;
  text-align: center;
}

.avatar {
  width: 17px;
  height: 17px;
  margin: -2px 7px 0 6px;
}

.tool-row {
  height: 17px;
  margin-top: -1px;
  display: flex;
  align-items: center;
  padding-left: 5.3px;
}

.tool {
  width: 21.4px;
  display: flex;
  justify-content: center;
  align-items: baseline;
  font-size: 12px;
  color: #4b4b4b;
}

.tool small {
  font-size: 8.5px;
}

.tool svg {
  width: 14px;
  height: 14px;
}

.tool path {
  fill: none;
  stroke: currentColor;
  stroke-width: 1.2;
}

.tool .solid,
.icons .solid {
  fill: currentColor;
  opacity: .7;
}

.tool.dim {
  color: #dadada;
}

.sep {
  width: 1px;
  height: 16px;
  margin: 0 3.7px;
  background: #d6d6d6;
}

/* main area */
.body {
  position: relative;
  height: 588px;
  flex-shrink: 0;
  display: flex;
  background: #dcdcdc;
}

.rail {
  width: 37px;
  flex-shrink: 0;
  display: flex;
  flex-direction: column;
  background: #ededed;
  border-right: 1px solid #e0e0e0;
}

.rail-item {
  width: 37px;
  height: 52.35px;
  padding-top: 10.5px;
  display: flex;
  flex-direction: column;
  align-items: center;
  line-height: 8.6px;
  color: #484848;
}

.rail-item svg {
  width: 19px;
  height: 19px;
  margin-bottom: 1px;
}

.rail-item path {
  fill: none;
  stroke: currentColor;
  stroke-width: 1.4;
}

.rail-item text {
  font: italic 700 8px "Liberation Sans", sans-serif;
  fill: currentColor;
}

.rail-item.active {
  background: #fff;
  color: #6d8edb;
}

.bin {
  margin-top: auto;
  height: 43px;
  padding-top: 0;
}

.library {
  width: 188px;
  flex-shrink: 0;
  background: #fff;
  display: flex;
  flex-direction: column;
}

.filter {
  height: 30.5px;
  flex-shrink: 0;
  padding: 6.5px 6.5px 0 7px;
  border-bottom: 1px solid #efefef;
}

.filter div {
  height: 16.5px;
  border: 1px solid #ccc;
  border-radius: 2px;
  padding-left: 3px;
  line-height: 15px;
  font-size: 8.5px;
  color: #777;
}

.lib-body {
  flex: 1;
  min-height: 0;
  display: flex;
}

.lib-list {
  width: 180px;
  padding-top: 3.2px;
  overflow: hidden;
}

.lib-list h4 {
  margin: 0;
  height: 17.9px;
  padding-left: 7px;
  line-height: 17px;
  font-size: 8.85px;
  font-weight: 400;
  color: #444;
  border-bottom: 1px solid #f0f0f0;
}

.parts {
  display: grid;
  grid-template-columns: 90px 90px;
}

.part {
  height: 89.5px;
  overflow: hidden;
  border-right: 1px solid #f1f1f1;
  border-bottom: 1px solid #f1f1f1;
}

.part svg {
  width: 90px;
  height: 76px;
}

.part > span {
  display: flex;
  justify-content: center;
  font-size: 8.87px;
  line-height: 10px;
  white-space: nowrap;
  color: #444;
}

.wire {
  fill: none;
  stroke: #861a2b;
  stroke-width: 1.4;
}

.block {
  fill: #8a0a1c;
}

.part circle {
  fill: #4b4548;
}

.black .wire {
  stroke: #111;
  stroke-width: 2.2;
}

.part text {
  font-family: "Liberation Serif", serif;
  fill: #000;
}

.scroll {
  width: 8px;
  display: flex;
  flex-direction: column;
  align-items: center;
  padding: 7px 0 0 1px;
}

.scroll b {
  width: 5.5px;
  height: 154px;
  margin-top: 3px;
  border-radius: 3px;
  background: #868686;
}

.scroll .up,
.scroll .down {
  border: 3px solid transparent;
  border-bottom: 5px solid #868686;
  border-top: 0;
}

.scroll .down {
  margin-top: auto;
  border-top: 5px solid #868686;
  border-bottom: 0;
}

.splitter {
  width: 4px;
  flex-shrink: 0;
  display: flex;
  align-items: center;
  background: radial-gradient(circle at .7px .7px, #bdbdbd .6px, #e6e6e6 .8px) 0 0 / 2px 2px;
}

.splitter i {
  width: 4.5px;
  height: 34px;
  flex-shrink: 0;
  background: #e9e9e9;
  border: 1px solid #999;
  font-size: 6px;
  line-height: 32px;
  color: #333;
  text-indent: -1px;
}

.splitter.right {
  width: 4.5px;
}

.work {
  position: relative;
  width: 906px;
  flex-shrink: 0;
  display: flex;
  flex-direction: column;
}

.doc-tabs {
  height: 20px;
  display: flex;
  font-size: 9.4px;
  color: #555;
}

.doc {
  width: 44px;
  padding-left: 5.5px;
  display: flex;
  align-items: center;
}

.doc.on {
  width: 106.5px;
  background: #fff;
  color: #444;
  gap: 3.5px;
  padding-left: 5px;
  border-left: 1px solid #ccc;
}

.doc svg {
  width: 12px;
  height: 12px;
}

.doc path {
  fill: none;
  stroke: #a8a058;
  stroke-width: 1.2;
}

.grid path {
  stroke: #f1f1f1;
}

.ruler path {
  fill: none;
  stroke: #999;
  stroke-width: .9;
}

.ruler text {
  font-size: 7.6px;
  fill: #808080;
}

.resistor path {
  fill: none;
  stroke: #960000;
  stroke-width: 9.4;
  stroke-linecap: round;
  stroke-linejoin: round;
}

.resistor .lead {
  stroke: #7a0000;
}

.mcu circle {
  fill: #d9d5d5;
}

.mcu path {
  stroke: #e20004;
  stroke-width: 9.4;
  stroke-linecap: round;
}

.mcu .edge {
  stroke-linecap: butt;
}

.mcu text {
  font: 56px "DejaVu Sans", Verdana, sans-serif;
  fill: #da000c;
}

.mcu .no {
  fill: #cc0a18;
}

.mcu .bar-i {
  font-family: "Noto Sans", sans-serif;
}

.cursor path {
  fill: #fff;
  stroke: #444;
  stroke-width: .9;
}

.sheets {
  position: absolute;
  left: 35px;
  top: 556px;
  display: flex;
  gap: 1.5px;
}

.sheet,
.add {
  height: 17.5px;
  border: 1px solid #ccc;
  background: #fafafa;
  display: flex;
  align-items: center;
}

.sheet {
  width: 77px;
  padding: 0 3px 0 5.5px;
  justify-content: space-between;
  font-size: 9.5px;
}

.sheet svg {
  width: 8px;
  height: 8px;
}

.sheet path {
  fill: none;
  stroke: #999;
}

.add {
  width: 15.5px;
  justify-content: center;
  font-size: 14px;
  font-weight: 700;
  color: #111;
  background: #f0f0f0;
}

.float {
  position: absolute;
  top: 25px;
  z-index: 2;
  background: #fafafa;
  border: 1px solid #d8d8d8;
  box-shadow: 0 1px 4px rgba(0, 0, 0, .3);
}

.float-head {
  height: 13.5px;
  padding: 0 3px;
  display: flex;
  justify-content: space-between;
  align-items: center;
  background: #efefef;
  font-size: 8.2px;
  white-space: nowrap;
}

.float-head i {
  width: 8px;
  height: 1px;
  background: #555;
}

.wiring {
  left: 721px;
  width: 139.5px;
  height: 60px;
}

.drawing {
  left: 864px;
  width: 46.5px;
  height: 154.5px;
}

.icons {
  display: grid;
  grid-template-columns: repeat(7, 18.65px);
  grid-auto-rows: 18.65px;
  justify-items: center;
  align-items: center;
  padding: 6px 0 0 3px;
}

.drawing .icons {
  grid-template-columns: repeat(2, 18.65px);
}

.icons svg {
  width: 14px;
  height: 14px;
}

.icons path {
  fill: none;
  stroke: #555;
  stroke-width: 1.1;
}

.icons text {
  font-size: 6px;
  font-weight: 700;
  fill: #555;
}

/* right hand properties */
.props {
  width: 139px;
  flex-shrink: 0;
  background: #dcdcdc;
  border-left: 1px solid #ececec;
}

.selected {
  height: 20px;
  display: flex;
  align-items: center;
  padding-left: 6px;
}

.selected span:first-child {
  width: 74px;
}

.props h3 {
  margin: 0;
  height: 20px;
  display: flex;
  align-items: center;
  gap: 3px;
  padding-left: 5px;
  background: #efefef;
  font-size: 9.3px;
  font-weight: 400;
  color: #444;
}

.props h3.second {
  height: 18.5px;
}

.props h3 i {
  border: 2px solid transparent;
  border-right-color: #bbb;
  border-bottom-color: #bbb;
}

.fields {
  height: 207px;
  background: #fff;
  padding: .3px 7px 0 6px;
}

.fields.custom {
  height: 186px;
}

.field {
  height: 20px;
  display: flex;
  align-items: center;
}

.field label {
  width: 58px;
  margin: -4.5px 4px 0 0;
  overflow: hidden;
  text-overflow: ellipsis;
  white-space: nowrap;
  flex-shrink: 0;
}

.input {
  width: 63px;
  height: 16.5px;
  border: 1px solid #ccc;
  display: flex;
  align-items: center;
  padding-left: 3px;
  overflow: hidden;
  white-space: nowrap;
  font-size: 8.1px;
  color: #222;
}

.input span {
  width: 56.5px;
  overflow: hidden;
}

.input.select {
  padding-left: 5.5px;
  justify-content: space-between;
  font-size: 8.85px;
}

.input.select span {
  width: auto;
}

.input svg {
  width: 8px;
  height: 8px;
  margin-right: 1px;
}

.input path {
  fill: none;
  stroke: #111;
  stroke-width: 1.9;
}

.input.readonly {
  background: #dadada;
  color: #777;
}

.btns {
  height: 45px;
  padding-top: 2.5px;
  display: flex;
  flex-direction: column;
  align-items: center;
  gap: 6px;
}

.btns button {
  height: 16.5px;
  padding: 0;
  border: 1px solid #6cc5a6;
  border-radius: 2px;
  background: #fff;
  color: #4db791;
  font: 8.2px "Liberation Sans", sans-serif;
}

.w74 {
  width: 74px;
}

.w76 {
  width: 76px;
}

.w78 {
  width: 78px;
}

.w81 {
  width: 81.5px;
}

.mouse {
  margin-top: 7px;
}

.mouse div {
  height: 16px;
  display: flex;
  align-items: center;
  padding-left: 6px;
  background: #eee;
  border-bottom: 1px solid #ddd;
}

.mouse span:first-child {
  width: 62px;
  height: 16px;
  line-height: 16px;
  border-right: 1px solid #ddd;
  margin-right: 3px;
}

.help {
  position: absolute;
  left: 1170.5px;
  top: 478px;
  width: 96px;
  height: 100px;
  z-index: 3;
}

.bubble {
  margin-top: 3px;
  width: 89.5px;
  height: 42px;
  border-radius: 4px;
  background: #5684f7;
  color: #fff;
  font: italic 700 9.6px/42px "Liberation Sans", sans-serif;
  text-align: center;
  white-space: nowrap;
}

.help i {
  position: absolute;
  border-radius: 50%;
  background: #5684f7;
}

.help .x {
  left: 81.5px;
  top: 0;
  width: 13px;
  height: 13px;
  padding: 2px;
}

.x path {
  stroke: #fff;
  stroke-width: 1.5;
}

.help .half {
  left: 37.5px;
  top: 36px;
  width: 13px;
  height: 13px;
}

.help .dot {
  left: 52px;
  top: 48px;
  width: 7px;
  height: 7px;
}

.chat {
  position: absolute;
  left: 53.5px;
  top: 56.5px;
  width: 40px;
  height: 40px;
  border-radius: 50%;
  background: #5684f7;
  display: flex;
  align-items: center;
  justify-content: center;
}

.chat svg {
  width: 20px;
  height: 20px;
}

/* taskbar */
.taskbar {
  height: 32px;
  flex-shrink: 0;
  display: flex;
  align-items: center;
  background: #202322;
  color: #f0f0f0;
  font: 8px/10.5px "Open Sans", "Noto Sans", sans-serif;
}

.weather {
  width: 538px;
  display: flex;
  align-items: center;
  padding-left: 11.5px;
  gap: 1.5px;
}

.weather svg {
  width: 20px;
  height: 20px;
}

.weather text {
  font-size: 8px;
  fill: #4a1020;
}

.weather span {
  display: block;
}

.weather .sub {
  color: #b8b8b8;
}

.apps {
  display: flex;
  gap: 1.4px;
}

.app {
  position: relative;
  width: 28px;
  height: 28px;
  display: flex;
  align-items: center;
  justify-content: center;
  border-radius: 3px;
}

.app svg {
  width: 16px;
  height: 16px;
}

.app.live {
  background: #2f3130;
}

.app.live::after,
.app.obs::after {
  content: "";
  position: absolute;
  left: 9px;
  bottom: 1px;
  width: 11px;
  height: 2px;
  border-radius: 1px;
  background: #9ad0e0;
}

.app.obs::after {
  left: 12.5px;
  width: 4px;
  background: #999;
}

.app.obs svg {
  width: 20px;
  height: 20px;
  margin-left: 3px;
}

.tray {
  margin-left: auto;
  display: flex;
  align-items: center;
  padding-right: 12.5px;
}

.tray svg {
  width: 12px;
  height: 12px;
}

.tray path {
  fill: none;
  stroke: #ddd;
  stroke-width: 1.3;
}

.tray .up {
  width: 9px;
  height: 9px;
  margin-right: 12px;
}

.tray .mic {
  margin-right: 10.5px;
}

.tray .net {
  margin-left: 10.5px;
}

.tray .vol {
  margin-left: 4px;
}

.tray .ring {
  margin-left: 4px;
}

.tray .ring path {
  fill: #e8e8e8;
  stroke: none;
}

.tray .ring .zz {
  fill: none;
  stroke: #333;
}

.stack span {
  display: block;
}

.lang {
  text-align: center;
}

.time {
  text-align: right;
  margin-left: 10px;
}
</style>
